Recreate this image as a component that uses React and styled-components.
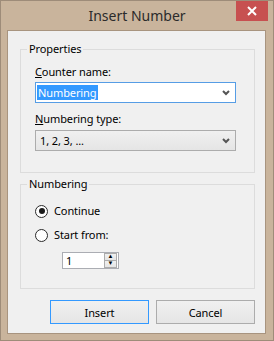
import React from "react";
import styled, { createGlobalStyle } from "styled-components";

const GlobalStyle = createGlobalStyle`
  html, body {
    margin: 0;
    padding: 0;
    background: #ffffff;
  }
  body {
    font-family: "Noto Sans", "Open Sans", sans-serif;
    font-size: 11px;
    letter-spacing: -0.1px;
    color: #000;
  }
`;

function Chevron() {
  return (
    <svg width="8" height="6" viewBox="0 0 8 6">
      <path d="M1 1 L4 4 L7 1" fill="none" stroke="#555" strokeWidth="2" />
    </svg>
  );
}

function CloseGlyph() {
  return (
    <svg width="10" height="10" viewBox="0 0 10 10">
      <path d="M1 1 L9 9 M9 1 L1 9" stroke="#fff" strokeWidth="2" />
    </svg>
  );
}

function App() {
  return (
    <>
      <GlobalStyle />
      <Window>
        <TitleBar>
          <Title>Insert Number</Title>
          <CloseButton>
            <CloseGlyph />
          </CloseButton>
        </TitleBar>
        <Client>
          <Group>
            <Legend>Properties</Legend>
            <Label>
              <u>C</u>ounter name:
            </Label>
            <Combo $focused>
              <Selected>Numbering</Selected>
              <Chevron />
            </Combo>
            <Label $spaced>
              <u>N</u>umbering type:
            </Label>
            <Combo $dropdown>
              <span>1, 2, 3, ...</span>
              <Chevron />
            </Combo>
          </Group>
          <Group $second>
            <Legend>Numbering</Legend>
            <RadioRow>
              <Radio $checked />
              <span>Continue</span>
            </RadioRow>
            <RadioRow $spaced>
              <Radio />
              <span>Start from:</span>
            </RadioRow>
            <Spinner>
              <SpinValue>1</SpinValue>
              <SpinButtons>
                <SpinButton>▲</SpinButton>
                <SpinButton>▼</SpinButton>
              </SpinButtons>
            </Spinner>
          </Group>
          <ButtonRow>
            <Button $default>Insert</Button>
            <Button>Cancel</Button>
          </ButtonRow>
        </Client>
      </Window>
    </>
  );
}

const Window = styled.div`
  width: 274px;
  height: 341px;
  box-sizing: border-box;
  border: 1px solid #9e8c79;
  background: #c9b49c;
  display: flex;
  flex-direction: column;
`;

const TitleBar = styled.div`
  height: 29px;
  display: grid;
  grid-template-columns: 1fr auto 1fr;
  align-items: start;
`;

const Title = styled.div`
  grid-column: 2;
  font-size: 14px;
  letter-spacing: 0;
  line-height: 29px;
  color: #2b2b2b;
`;

const CloseButton = styled.div`
  grid-column: 3;
  justify-self: end;
  width: 32px;
  height: 20px;
  margin-right: 5px;
  background: #c75050;
  display: flex;
  align-items: center;
  justify-content: center;
`;

const Client = styled.div`
  flex: 1;
  margin: 0 7px 6px 6px;
  border: 1px solid #a8947f;
  background: #f0f0f0;
  padding: 0 10px 0 12px;
  display: flex;
  flex-direction: column;
`;

const Group = styled.fieldset`
  margin: ${(p) => (p.$second ? "3px" : "10px")} 0 0 0;
  padding: ${(p) => (p.$second ? "11px 18px 19px 14px" : "7px 18px 21px 14px")};
  border: 1px solid #dcdcdc;
  min-width: 0;
  display: flex;
  flex-direction: column;
  align-items: flex-start;
`;

const Legend = styled.legend`
  padding: 0 2px;
  margin-left: -8px;
  line-height: 16px;
`;

const Label = styled.div`
  line-height: 16px;
  margin-top: ${(p) => (p.$spaced ? "8px" : "0")};
  margin-bottom: ${(p) => (p.$spaced ? "3px" : "2px")};
`;

const Combo = styled.div`
  box-sizing: border-box;
  width: 201px;
  height: 21px;
  border: 1px solid ${(p) => (p.$focused ? "#569de5" : "#acacac")};
  background: ${(p) =>
    p.$dropdown ? "linear-gradient(#f0f0f0, #e5e5e5)" : "#ffffff"};
  display: flex;
  align-items: center;
  justify-content: space-between;
  padding: 0 5px 0 ${(p) => (p.$dropdown ? "4px" : "1px")};
`;

const Selected = styled.span`
  background: #3399ff;
  color: #fff;
  line-height: 15px;
  padding: 0 2px 0 1px;
`;

const RadioRow = styled.div`
  display: flex;
  align-items: center;
  gap: 6px;
  line-height: 16px;
  margin-top: ${(p) => (p.$spaced ? "8px" : "0")};
`;

const Radio = styled.span`
  box-sizing: border-box;
  width: 13px;
  height: 13px;
  border-radius: 50%;
  border: 1px solid #2a2a2a;
  background: #fff;
  display: flex;
  align-items: center;
  justify-content: center;

  &::after {
    content: "";
    width: 6px;
    height: 6px;
    border-radius: 50%;
    background: ${(p) => (p.$checked ? "#1a1a1a" : "transparent")};
  }
`;

const Spinner = styled.div`
  box-sizing: border-box;
  margin: 9px 0 0 27px;
  width: 57px;
  height: 17px;
  border: 1px solid #abadb3;
  background: #fff;
  display: flex;
  align-items: stretch;
`;

const SpinValue = styled.div`
  flex: 1;
  padding-left: 3px;
  line-height: 15px;
`;

const SpinButtons = styled.div`
  width: 13px;
  margin: 0 1px 0 0;
  display: flex;
  flex-direction: column;
`;

const SpinButton = styled.div`
  flex: 1;
  border: 1px solid #acacac;
  background: linear-gradient(#f0f0f0, #e5e5e5);
  font-size: 6px;
  line-height: 5px;
  text-align: center;
  color: #000;

  & + & {
    border-top: none;
  }
`;

const ButtonRow = styled.div`
  display: flex;
  justify-content: flex-end;
  gap: 7px;
  margin-top: 11px;
`;

const Button = styled.div`
  box-sizing: border-box;
  width: 99px;
  height: 24px;
  border: 1px solid ${(p) => (p.$default ? "#3399ff" : "#acacac")};
  background: linear-gradient(#f0f0f0, #e5e5e5);
  display: flex;
  align-items: center;
  justify-content: center;
`;

export default App;
